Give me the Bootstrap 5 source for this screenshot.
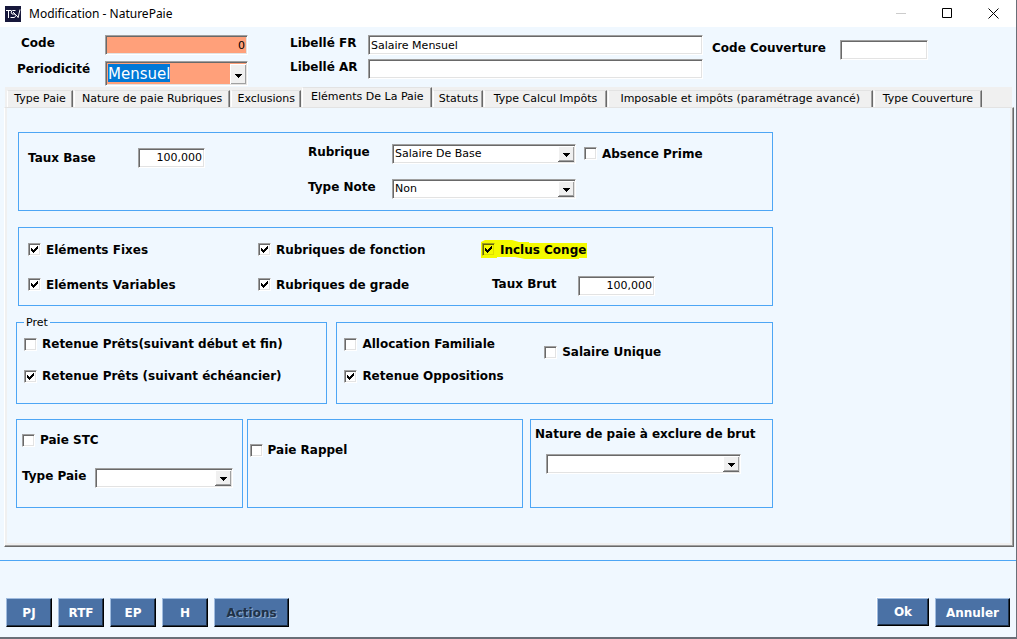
<!DOCTYPE html>
<html lang="fr">
<head>
<meta charset="utf-8">
<meta name="viewport" content="width=device-width, initial-scale=1">
<title>Modification - NaturePaie</title>
<link href="https://cdn.jsdelivr.net/npm/bootstrap@5.3.0/dist/css/bootstrap.min.css" rel="stylesheet">
<style>
:root{--face:#f0f0f0;--paper:#f0f8ff;--line:#4da6f5;--steel:#4a71a5;--salmon:#ffa07a}
body{font-family:Verdana,"DejaVu Sans",sans-serif;font-size:11px;line-height:16px;color:#000;background:var(--paper)}
.window{min-height:100vh;border-right:1px solid #696f78}
.titlebar{height:27px;background:#fff;font:12px/16px "Noto Sans",sans-serif;padding:0 15px 0 5px}
.titlebar button{border:0;background:none;padding:0;width:16px;height:16px;display:flex;align-items:center;justify-content:center}
.titlebar svg{flex:none}
label{font-weight:700;font-size:12px;line-height:16px;white-space:nowrap}
/* sunken fields */
.field,.pick{height:20px;width:100%;font-size:11px;line-height:14px;padding:0 2px;color:#000;border:1px solid;border-color:#a0a0a0 #fff #fff #a0a0a0;border-radius:0;background-color:#fff;box-shadow:inset 1px 1px #696969,inset -1px -1px #e3e3e3;outline:0;display:block}
.pick{appearance:none;padding-right:18px;background-repeat:no-repeat;background-position:right center;background-image:url("data:image/svg+xml,%3Csvg xmlns='http://www.w3.org/2000/svg' width='17' height='18'%3E%3Cpath fill='%23f0f0f0' d='M0 1h17v16H0z'/%3E%3Cpath fill='%23fff' d='M0 1h16v1H1v14H0z'/%3E%3Cpath fill='%23a0a0a0' d='M15 2h1v14H1v-1h14z'/%3E%3Cpath fill='%23696969' d='M16 1h1v16H0v-1h16z'/%3E%3Cpath d='M5 8h7v1H5zm1 1h5v1H6zm1 1h3v1H7zm1 1h1v1H8z'/%3E%3C/svg%3E")}
.salmon{background-color:var(--salmon)}
.chosen{height:25px;font-size:15px;line-height:19px;padding-top:1px;color:#fff;background-image:linear-gradient(#0078d7,#0078d7),url("data:image/svg+xml,%3Csvg xmlns='http://www.w3.org/2000/svg' width='17' height='22'%3E%3Cpath fill='%23f0f0f0' d='M0 1h17v21H0z'/%3E%3Cpath fill='%23fff' d='M0 1h16v1H1v19H0z'/%3E%3Cpath fill='%23a0a0a0' d='M15 2h1v19H1v-1h14z'/%3E%3Cpath fill='%23696969' d='M16 1h1v21H0v-1h16z'/%3E%3Cpath d='M5 11h7v1H5zm1 1h5v1H6zm1 1h3v1H7zm1 1h1v1H8z'/%3E%3C/svg%3E");background-size:62px 18px,auto;background-position:2px 2px,right center}
.tick{display:flex;align-items:center;gap:5px}
.tick input{appearance:none;flex:none;width:13px;height:13px;margin:0;border:1px solid;border-color:#a0a0a0 #fff #fff #a0a0a0;background:#fff;box-shadow:inset 1px 1px #696969,inset -1px -1px #e3e3e3}
.tick input:checked{background:#fff url("data:image/svg+xml,%3Csvg xmlns='http://www.w3.org/2000/svg' width='11' height='11'%3E%3Cpath d='M2 4h1v1h1v1h1V5h1V4h1V3h1V2h1v3H8v1H7v1H6v1H5v1H4V8H3V7H2z'/%3E%3C/svg%3E") center no-repeat}
.marker{margin-left:-1px;padding:2px 0 2px 1px;background:url("data:image/svg+xml,%3Csvg xmlns='http://www.w3.org/2000/svg' width='108' height='20' viewBox='0 0 108 20'%3E%3Cpath fill='%23f4fa00' d='M0 2 4 0h27l7 2h10v1h58v15h-8v1H44l-10-2H16v1H0z'/%3E%3C/svg%3E") 0 0 no-repeat}
.marker input,.marker input:checked{background-color:#f4fa00;border-color:#9c9c20 #f4fa00 #f4fa00 #9c9c20;box-shadow:inset 1px 1px #666600,inset -1px -1px #dede00}
/* header */
.head{height:60px;padding:8px 88px 0 17px}
.head .id-part{display:grid;grid-template-columns:88px 143px;grid-template-rows:26px 25px}
.head .name-part{display:grid;grid-template-columns:78px 1fr;grid-template-rows:24px 24px;margin:0 9px 0 42px}
.head .cover-part{display:grid;grid-template-columns:128px 88px;margin-top:5px}
/* tabs */
.tabs{background:var(--face);height:20px;margin:0 4px 0 5px;padding:0 29px 0 2px}
.tabs>div{display:grid;grid-template-columns:67fr 157fr 71fr 131fr 51fr 123fr 266fr 109fr;height:20px;align-items:end}
.tabs button{font-size:11px;line-height:14px;height:17px;padding:1px 0 2px;white-space:nowrap;background:var(--face);color:#000;border:1px solid;border-color:#e3e3e3 #696969 transparent #fff;border-bottom:0;box-shadow:inset -1px 0 #a0a0a0;margin-right:1px}
.tabs button.active{height:20px;padding-bottom:3px}
.sheet{margin:0 2px 0 4px;padding:24px 14px 38px 11px;border:1px solid;border-color:#e3e3e3 #696969 #696969 #fff;box-shadow:inset -1px -1px #a0a0a0,inset 2px 0 var(--face),inset -3px -3px var(--face)}
.groups{width:77%;gap:16px}
.box{border:1px solid var(--line);position:relative;min-width:0}
.box legend{position:absolute;top:-7px;left:7px;width:auto;padding:0 2px;margin:0;font-size:11px;line-height:14px;background:var(--paper);float:none}
.base{margin-left:2px;display:grid;grid-template-columns:110fr 170fr 84fr 192fr 188fr;grid-template-rows:35px 35px;align-items:center;padding:3px 0 4px 9px}
.flags{margin-left:2px;display:grid;grid-template-columns:230fr 224fr 290fr;grid-template-rows:35px 35px;align-items:center;padding:4px 0 3px 9px}
.brut{padding:2px 0 0 10px}
.loans{display:grid;grid-template-columns:311fr 436fr;gap:9px}
.loans .box{display:grid;grid-template-rows:32px 32px;align-items:center;padding:5px 0 11px 7px}
.loans .family{grid-template-columns:200fr 228fr}
.ends{display:grid;grid-template-columns:225fr 278fr 242fr;margin-top:-1px}
.ends .box{height:89px}
.stc{padding:12px 9px 0 5px;margin-right:2px}
.stc .pick{margin-left:9px}
.rappel{padding:22px 0 0 2px;margin:0 4px 0 2px}
.exclu{padding:6px 30px 0 4px;margin-left:3px}
.exclu .pick{margin:11px 0 0 11px;width:195px}
/* footer */
.foot{border-top:1px solid var(--line);margin-top:13px;padding:37px 6px 0}
.cmd{height:29px;min-width:46px;padding:0 8px;font-size:12px;font-weight:700;line-height:24px;color:#fff;background:var(--steel);border:1px solid;border-color:#a0bcdf #000 #000 #a0bcdf;border-radius:0;box-shadow:inset -1px -1px #203248}
.cmd:disabled{color:#203248;text-shadow:1px 1px #8eaacd;opacity:1}
.cmd.wide{min-width:75px}
.cmd.ok{height:28px;min-width:52px;box-shadow:inset -1px -1px #203248,-1px -1px #fff}
.edge{height:2px;background:#696f78;margin-top:auto}
</style>
</head>
<body>
<div class="window d-flex flex-column">
  <header class="titlebar d-flex align-items-center">
    <svg width="16" height="16" viewBox="0 0 16 16" aria-hidden="true"><path fill="#17183b" d="M0 0h16v16H0z"/><path d="M1 4.500h5.500M3.500 4.500V12M10.500 4.500H7.500L6 6l1 2h3l1 1.500-1.500 2H5.500M15 3.500l-2 8.500M8 6l5 5" fill="none" stroke="#fff"/></svg>
    <span class="ps-1 ms-1">Modification - NaturePaie</span>
    <div class="ms-auto d-flex" style="gap:30px">
      <button type="button" aria-label="Réduire"><svg width="11" height="11"><path d="M0 5.500h10" stroke="#ccc"/></svg></button>
      <button type="button" aria-label="Agrandir"><svg width="11" height="11"><path d="M.5.5h9v9h-9z" fill="none" stroke="#000"/></svg></button>
      <button type="button" aria-label="Fermer"><svg width="11" height="11"><path d="m.5.5 10 10m0-10-10 10" stroke="#000"/></svg></button>
    </div>
  </header>

  <section class="head d-flex">
    <div class="id-part">
      <label for="code" class="ps-1">Code</label><input id="code" class="field salmon text-end" value="0">
      <label for="period">Periodicité</label><select id="period" class="pick chosen salmon"><option>Mensuel</option></select>
    </div>
    <div class="name-part flex-fill">
      <label for="fr">Libellé FR</label><input id="fr" class="field" value="Salaire Mensuel">
      <label for="ar">Libellé AR</label><input id="ar" class="field">
    </div>
    <div class="cover-part">
      <label for="cover">Code Couverture</label><input id="cover" class="field">
    </div>
  </section>

  <nav class="tabs"><div role="tablist">
    <button type="button" role="tab">Type Paie</button>
    <button type="button" role="tab">Nature de paie Rubriques</button>
    <button type="button" role="tab">Exclusions</button>
    <button type="button" role="tab" class="active" aria-selected="true">Eléments De La Paie</button>
    <button type="button" role="tab">Statuts</button>
    <button type="button" role="tab">Type Calcul Impôts</button>
    <button type="button" role="tab">Imposable et impôts (paramétrage avancé)</button>
    <button type="button" role="tab">Type Couverture</button>
  </div></nav>

  <main class="sheet">
    <div class="groups d-flex flex-column">
      <section class="box base">
        <label for="tbase" class="pt-2">Taux Base</label>
        <div class="pt-2"><input id="tbase" class="field text-end" style="width:67px" value="100,000"></div>
        <label for="rub" class="pb-1">Rubrique</label>
        <div class="pe-2"><select id="rub" class="pick"><option>Salaire De Base</option></select></div>
        <label class="tick"><input type="checkbox">Absence Prime</label>
        <span></span><span></span>
        <label for="note" class="pb-1">Type Note</label>
        <div class="pe-2"><select id="note" class="pick"><option>Non</option></select></div>
      </section>

      <section class="box flags">
        <label class="tick"><input type="checkbox" checked>Eléments Fixes</label>
        <label class="tick"><input type="checkbox" checked>Rubriques de fonction</label>
        <label class="tick marker"><input type="checkbox" checked>Inclus Conge</label>
        <label class="tick"><input type="checkbox" checked>Eléments Variables</label>
        <label class="tick"><input type="checkbox" checked>Rubriques de grade</label>
        <div class="brut d-flex align-items-center">
          <label for="tbrut" class="pb-1" style="width:86px">Taux Brut</label><input id="tbrut" class="field text-end" style="width:77px" value="100,000">
        </div>
      </section>

      <div class="loans">
        <fieldset class="box">
          <legend>Pret</legend>
          <label class="tick"><input type="checkbox">Retenue Prêts(suivant début et fin)</label>
          <label class="tick"><input type="checkbox" checked>Retenue Prêts (suivant échéancier)</label>
        </fieldset>
        <section class="box family">
          <label class="tick"><input type="checkbox">Allocation Familiale</label>
          <label class="tick pt-3"><input type="checkbox">Salaire Unique</label>
          <label class="tick"><input type="checkbox" checked>Retenue Oppositions</label>
        </section>
      </div>

      <div class="ends">
        <section class="box stc d-flex flex-column gap-3">
          <label class="tick"><input type="checkbox">Paie STC</label>
          <div class="d-flex align-items-center pt-1">
            <label for="tpaie" class="pb-1">Type Paie</label><select id="tpaie" class="pick"><option></option></select>
          </div>
        </section>
        <section class="box rappel"><label class="tick"><input type="checkbox">Paie Rappel</label></section>
        <section class="box exclu">
          <label for="excl">Nature de paie à exclure de brut</label>
          <select id="excl" class="pick"><option></option></select>
        </section>
      </div>
    </div>
  </main>

  <footer class="foot d-flex">
    <div class="d-flex" style="gap:6px">
      <button type="button" class="cmd">PJ</button><button type="button" class="cmd">RTF</button><button type="button" class="cmd">EP</button><button type="button" class="cmd">H</button><button type="button" class="cmd wide" disabled>Actions</button>
    </div>
    <div class="d-flex ms-auto" style="gap:6px"><button type="button" class="cmd ok">Ok</button><button type="button" class="cmd wide">Annuler</button></div>
  </footer>
  <div class="edge"></div>
</div>
<script src="https://cdn.jsdelivr.net/npm/bootstrap@5.3.0/dist/js/bootstrap.bundle.min.js"></script>
</body>
</html>
